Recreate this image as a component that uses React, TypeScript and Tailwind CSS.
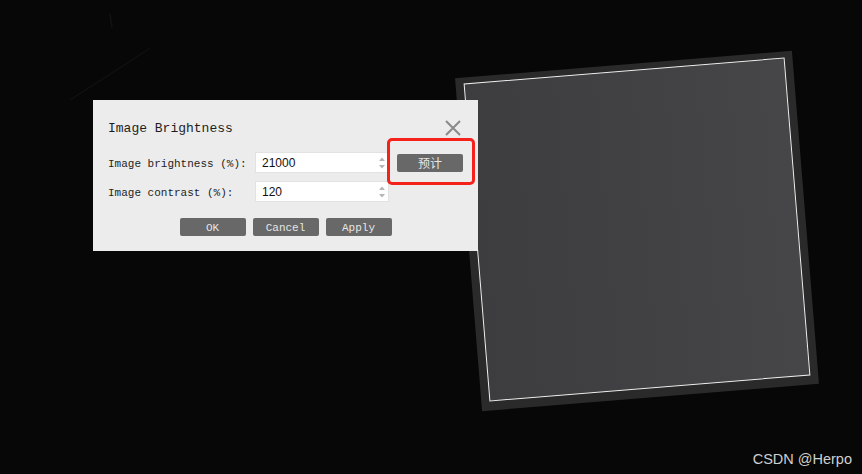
import React from 'react';

const mono = { fontFamily: '"Liberation Mono", "Noto Sans CJK SC", monospace' };

function Spinner() {
  return (
    <svg width="8" height="14" viewBox="0 0 8 14" className="shrink-0">
      <path d="M4 1.5 L7 5 L1 5 Z" fill="#b5b5b5" />
      <path d="M4 12.5 L7 9 L1 9 Z" fill="#b5b5b5" />
    </svg>
  );
}

function NumberField({ value }: { value: string }) {
  return (
    <div className="flex h-[21px] w-[134px] items-center justify-between border border-[#e2e2e2] bg-white pl-[6px] pr-[2px]">
      <span className="pt-[1px] text-[12px] text-[#111]" style={{ fontFamily: '"Liberation Sans", sans-serif' }}>{value}</span>
      <Spinner />
    </div>
  );
}

function GrayButton({ label, cjk }: { label: string; cjk?: boolean }) {
  return (
    <button
      type="button"
      className="flex h-[18px] w-[66px] items-center justify-center rounded-[2px] bg-[#686868] pt-[2px] text-[11px] leading-none text-[#e6e6e6]"
      style={cjk ? { fontFamily: '"Noto Sans CJK SC", sans-serif', fontSize: 12, paddingTop: 0 } : mono}
    >
      {label}
    </button>
  );
}

export default function App() {
  return (
    <div className="relative h-[474px] w-[862px] overflow-hidden bg-[#070707]">
      {/* faint scratches on the backdrop */}
      <svg className="absolute left-0 top-0" width="500" height="120" viewBox="0 0 500 120">
        <path d="M70 100 C 100 80, 130 62, 150 48" stroke="#111111" strokeWidth="1.2" fill="none" />
        <path d="M110 14 L112 28" stroke="#121212" strokeWidth="1.5" fill="none" />
      </svg>

      {/* rotated plate */}
      <div className="absolute left-[468px] top-[64px] h-[334px] w-[338px] rotate-[-4.65deg] bg-[#2a2a2a]" />
      <div className="absolute left-[476px] top-[70px] h-[319px] w-[322px] rotate-[-4.65deg] border-[1.5px] border-[#efefef] bg-gradient-to-r from-[#3d3c3e] via-[#414042] to-[#464547]" />

      {/* dialog */}
      <div className="absolute left-[93px] top-[100px] flex h-[151px] w-[385px] flex-col bg-[#ececec] pl-[15px]" style={mono}>
        <div className="mt-[19px] flex h-[18px] items-center justify-between pr-[17px]">
          <span className="pt-[1px] text-[13px] text-[#1e1e1e]">Image Brightness</span>
          <svg width="16" height="16" viewBox="0 0 16 16">
            <path d="M1 1 L15 15 M15 1 L1 15" stroke="#8a8a8a" strokeWidth="2" />
          </svg>
        </div>

        <div className="mt-[15px] flex h-[21px] items-center">
          <span className="w-[147px] pt-[3px] text-[11px] text-[#1e1e1e]">Image brightness (%):</span>
          <NumberField value="21000" />
          <div className="ml-[8px]">
            <GrayButton label="预计" cjk />
          </div>
        </div>

        <div className="mt-[8px] flex h-[21px] items-center">
          <span className="w-[147px] pt-[3px] text-[11px] text-[#1e1e1e]">Image contrast (%):</span>
          <NumberField value="120" />
        </div>

        <div className="mt-[16px] flex justify-center gap-[7px] pr-[15px]">
          <GrayButton label="OK" />
          <GrayButton label="Cancel" />
          <GrayButton label="Apply" />
        </div>

        {/* annotation box */}
        <div className="absolute left-[294px] top-[38px] h-[47px] w-[88px] rounded-[5px] border-[3px] border-[#f5211b]" />
      </div>

      <span
        className="absolute right-[10px] top-[449px] text-[14.5px] text-[#cfcfcf]"
        style={{ fontFamily: '"Liberation Sans", sans-serif' }}
      >
        CSDN @Herpo
      </span>
    </div>
  );
}
